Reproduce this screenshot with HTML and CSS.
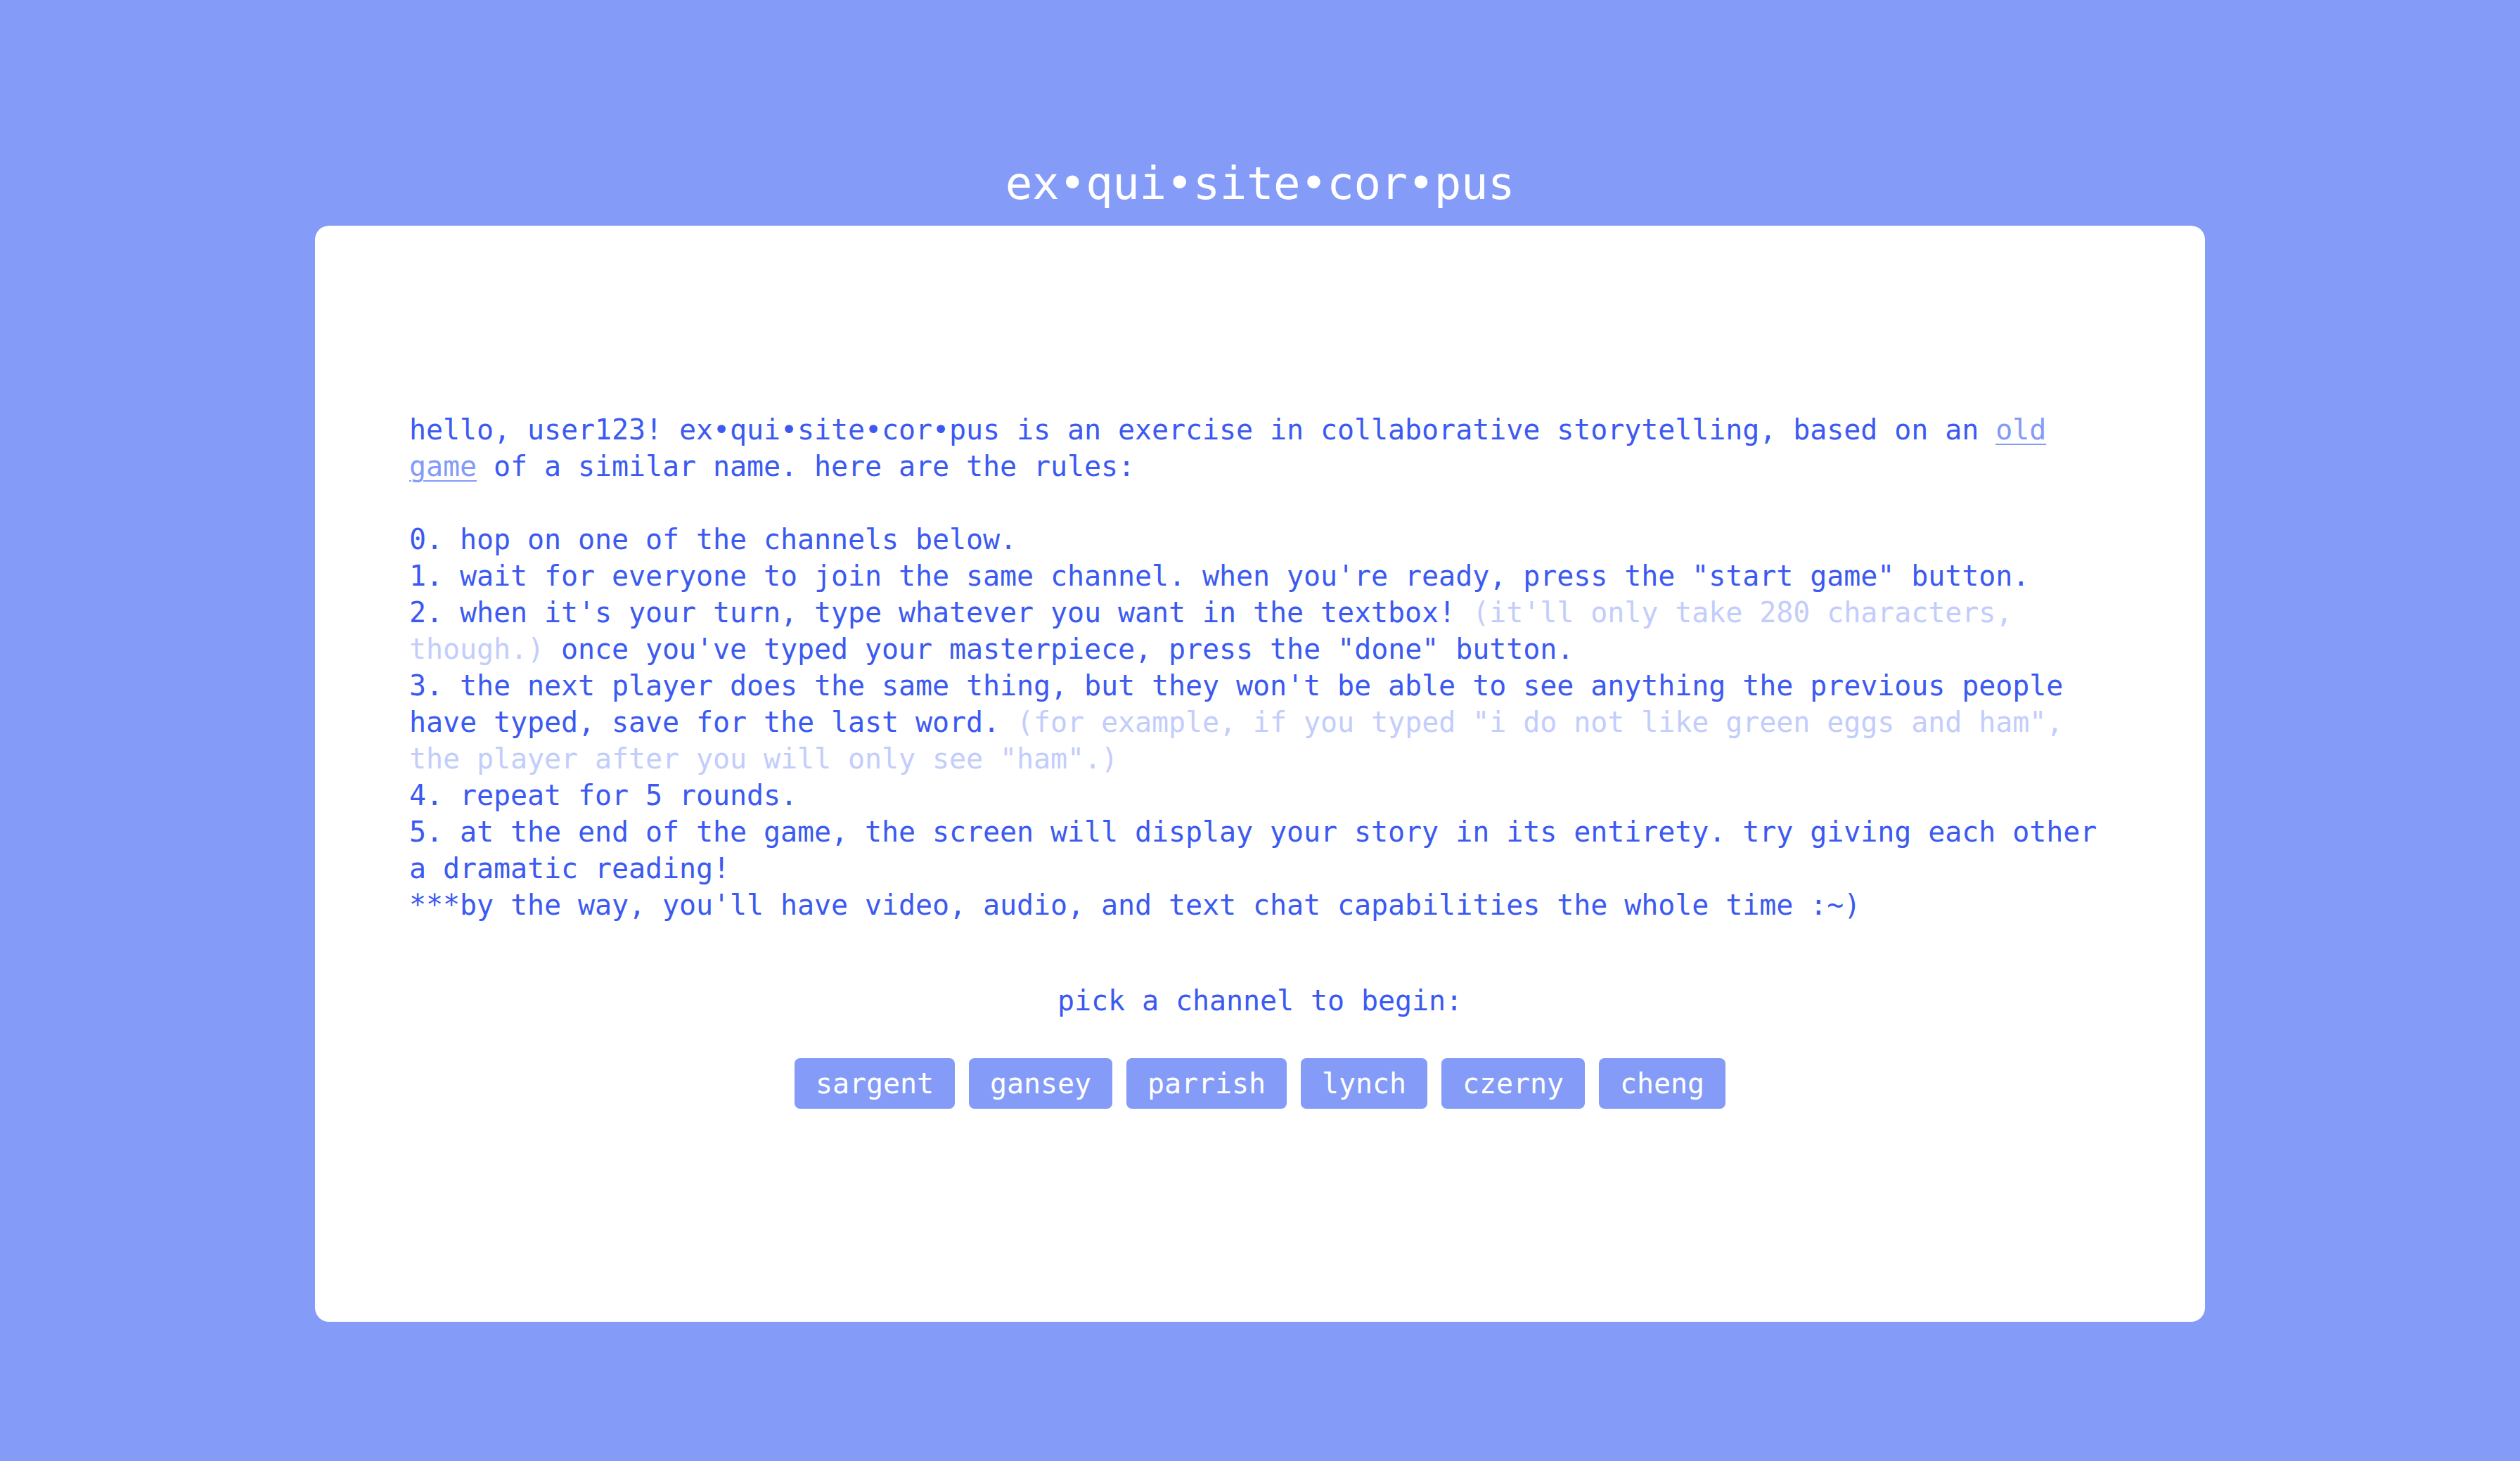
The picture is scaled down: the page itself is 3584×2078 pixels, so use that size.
FILE: index.html
```html
<!DOCTYPE html>
<html lang="en">
<head>
<meta charset="utf-8">
<title>ex•qui•site•cor•pus</title>
<link rel="stylesheet" href="styles.css">
</head>
<body>
<header class="header">
  <h1 class="title">ex•qui•site•cor•pus</h1>
</header>
<main class="card">
  <section class="rules">
    <p class="intro">hello, user123! ex•qui•site•cor•pus is an exercise in collaborative storytelling, based on an <a class="link" href="#">old game</a> of a similar name. here are the rules:</p>
    <p class="rule">0. hop on one of the channels below.</p>
    <p class="rule">1. wait for everyone to join the same channel. when you're ready, press the "start game" button.</p>
    <p class="rule">2. when it's your turn, type whatever you want in the textbox! <span class="aside">(it'll only take 280 characters, though.)</span> once you've typed your masterpiece, press the "done" button.</p>
    <p class="rule">3. the next player does the same thing, but they won't be able to see anything the previous people have typed, save for the last word. <span class="aside">(for example, if you typed "i do not like green eggs and ham", the player after you will only see "ham".)</span></p>
    <p class="rule">4. repeat for 5 rounds.</p>
    <p class="rule">5. at the end of the game, the screen will display your story in its entirety. try giving each other a dramatic reading!</p>
    <p class="rule">***by the way, you'll have video, audio, and text chat capabilities the whole time :~)</p>
  </section>
  <p class="pick">pick a channel to begin:</p>
  <nav class="channels">
    <button class="channel">sargent</button>
    <button class="channel">gansey</button>
    <button class="channel">parrish</button>
    <button class="channel">lynch</button>
    <button class="channel">czerny</button>
    <button class="channel">cheng</button>
  </nav>
</main>
</body>
</html>
```
FILE: styles.css
```css
* { box-sizing: border-box; }
html, body {
  margin: 0;
  padding: 0;
}
body {
  background: #849bf8;
  min-height: 100vh;
  font-family: "DejaVu Sans Mono", "Liberation Mono", monospace;
  color: #3c5af1;
}
.header {
  padding-top: 223px;
  margin-bottom: 22px;
}
.title {
  margin: 0;
  font-size: 64px;
  line-height: 76px;
  font-weight: normal;
  letter-spacing: -0.4px;
  color: #ffffff;
  text-align: center;
}
.card {
  width: 2688px;
  height: 1559px;
  margin: 0 auto;
  background: #ffffff;
  border-radius: 20px;
  padding: 264px 134px 0 134px;
  font-size: 40px;
  line-height: 52px;
  letter-spacing: -0.08px;
}
.rules p {
  margin: 0;
}
.rules .intro {
  margin-bottom: 52px;
}
.link {
  color: #849bf8;
  text-decoration: underline;
  text-underline-offset: 6px;
  text-decoration-thickness: 2px;
}
.aside {
  color: #c3cdfb;
}
.pick {
  margin: 84px 0 0 0;
  text-align: center;
}
.channels {
  margin-top: 56px;
  display: flex;
  justify-content: center;
  gap: 20px;
}
.channel {
  font-family: inherit;
  font-size: 40px;
  line-height: 52px;
  letter-spacing: -0.08px;
  padding: 10px 30px;
  border: none;
  border-radius: 8px;
  background: #849bf8;
  color: #ffffff;
  cursor: pointer;
}
```
